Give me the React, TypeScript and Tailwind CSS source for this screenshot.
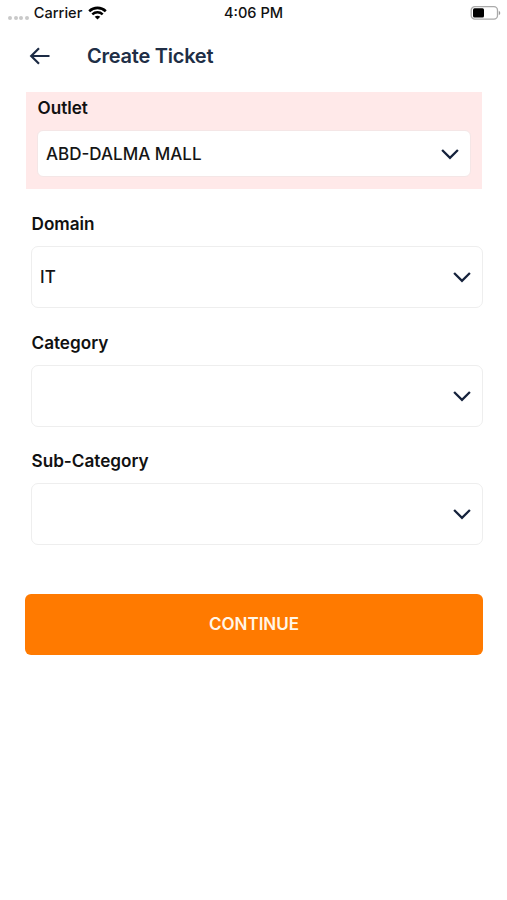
import React from "react";

function Chevron() {
  return (
    <svg width="18" height="12" viewBox="0 0 18 12" fill="none" className="-mr-[0.5px] shrink-0" aria-hidden="true">
      <path d="M1.1 2 9 9.8 16.9 2" stroke="#15223c" strokeWidth="2.3" strokeLinejoin="miter" />
    </svg>
  );
}

function Field({ label, value }: { label: string; value: string }) {
  return (
    <div className="ml-[5px] h-[118.5px]">
      <div className="h-[34px] pl-[0.5px] text-[17.15px] leading-6 font-semibold text-[#111]">{label}</div>
      <button
        type="button"
        aria-label={label}
        className="flex h-[62px] w-[452px] items-center justify-between rounded-[7px] border border-[#eeeeee] bg-white pr-3 pl-2"
      >
        <span className="text-[17px] leading-6 font-medium text-[#151515]">{value}</span>
        <Chevron />
      </button>
    </div>
  );
}

export default function App() {
  return (
    <div className="h-[900px] w-[507px] overflow-hidden bg-white font-['Inter',sans-serif]">
      <div className="grid h-[26px] grid-cols-3 items-center pr-[6px] pl-2 text-[14.6px] leading-[22px] font-medium text-[#111]">
        <div className="flex items-center">
          <div className="mt-[9px] mr-[5px] flex gap-[1.6px]">
            <i className="size-1 rounded-full bg-[#c9c9c9]" />
            <i className="size-1 rounded-full bg-[#c9c9c9]" />
            <i className="size-1 rounded-full bg-[#c9c9c9]" />
            <i className="size-1 rounded-full bg-[#c9c9c9]" />
          </div>
          <span>Carrier</span>
          <svg width="19" height="14" viewBox="0 0 19 14" fill="none" className="ml-[6px]" aria-hidden="true">
            <path d="M1.2 5.2c4.7-4.5 11.9-4.5 16.6 0" stroke="#000" strokeWidth="2.6" />
            <path d="M4.3 8.3c3-2.8 7.4-2.8 10.4 0" stroke="#000" strokeWidth="2.5" />
            <path d="M6.7 10.8c1.7-1.4 3.9-1.4 5.6 0l-2.8 2.8z" fill="#000" />
          </svg>
        </div>
        <div className="pr-[2px] text-center">4:06 PM</div>
        <div className="flex justify-end">
          <svg width="31" height="16" viewBox="0 0 31 16" fill="none" aria-hidden="true">
            <rect x="1.2" y="1.7" width="26.3" height="12.4" rx="3.6" stroke="#aaaaaa" strokeWidth="1.3" />
            <rect x="3" y="3.3" width="11" height="9.2" rx="1.5" fill="#000" />
            <path d="M28.8 6c1.9.5 1.9 3.5 0 4z" fill="#999" />
          </svg>
        </div>
      </div>

      <header className="flex h-[66px] items-center pb-[6px] pl-[29px]">
        <svg width="22" height="20" viewBox="0 0 22 20" fill="none" aria-hidden="true">
          <path d="M20.5 10H2.5M10 2.2 2.2 10l7.8 7.8" stroke="#1c2b45" strokeWidth="2.2" />
        </svg>
        <h1 className="ml-9 text-[20px] leading-7 font-semibold tracking-[-0.24px] text-[#202e46]">Create Ticket</h1>
      </header>

      <main className="ml-[26px]">
        <section className="h-[97px] w-[456px] bg-[#ffe9e9] px-[11px] pt-[4px]">
          <div className="h-[34px] pl-[0.5px] text-[17.15px] leading-6 font-semibold text-[#111]">Outlet</div>
          <button
            type="button"
            aria-label="Outlet"
            className="flex h-[47px] w-[434px] items-center justify-between rounded-[6px] border border-[#f4e6e6] bg-white pr-3 pl-2"
          >
            <span className="text-[17px] leading-6 font-medium text-[#151515]">ABD-DALMA MALL</span>
            <Chevron />
          </button>
        </section>

        <div className="pt-[23px]">
          <Field label="Domain" value="IT" />
          <Field label="Category" value="" />
          <Field label="Sub-Category" value="" />
        </div>

        <button
          type="button"
          className="mt-[26px] -ml-px flex h-[61px] w-[458px] items-center justify-center rounded-[6px] bg-[#ff7a00] pt-[2px] text-[17px] font-semibold text-[#fff6e8]"
        >
          CONTINUE
        </button>
      </main>
    </div>
  );
}
